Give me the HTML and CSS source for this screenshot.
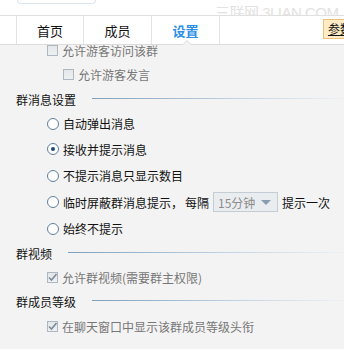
FILE: index.html
```html
<!DOCTYPE html>
<html>
<head>
<meta charset="utf-8">
<link rel="stylesheet" href="styles.css">
</head>
<body>
<div class="page">
  <div class="top">
    <div class="search"></div>
    <div class="watermark">三联网 3LIAN.COM</div>
  </div>
  <div class="tabs">
    <div class="tab first">首页</div>
    <div class="tab">成员</div>
    <div class="tab active">设置<span class="notch"></span></div>
    <div class="btn">参数</div>
  </div>
  <div class="content">
    <div class="row cb clipped"><span class="box"></span><span class="dis">允许游客访问该群</span></div>
    <div class="row cb sub"><span class="box"></span><span class="dis">允许游客发言</span></div>
    <div class="head h1"><span>群消息设置</span><span class="line"></span></div>
    <div class="row radio r1"><span class="rd"></span>自动弹出消息</div>
    <div class="row radio"><span class="rd on"></span>接收并提示消息</div>
    <div class="row radio"><span class="rd"></span>不提示消息只显示数目</div>
    <div class="row radio"><span class="rd"></span>临时屏蔽群消息提示，<span class="gap"></span>每隔<span class="select"><span class="val">15分钟</span><span class="arrow"></span></span>提示一次</div>
    <div class="row radio"><span class="rd"></span>始终不提示</div>
    <div class="head"><span>群视频</span><span class="line"></span></div>
    <div class="row cb c1"><span class="box checked"><svg width="11" height="11" viewBox="0 0 11 11"><path d="M2 5.5 L4.5 8 L9.5 2" fill="none" stroke="#7d8a97" stroke-width="1.6"/></svg></span><span class="dis">允许群视频(需要群主权限)</span></div>
    <div class="head"><span>群成员等级</span><span class="line"></span></div>
    <div class="row cb c2"><span class="box checked"><svg width="11" height="11" viewBox="0 0 11 11"><path d="M2 5.5 L4.5 8 L9.5 2" fill="none" stroke="#7d8a97" stroke-width="1.6"/></svg></span><span class="dis">在聊天窗口中显示该群成员等级头衔</span></div>
  </div>
</div>
</body>
</html>
```
FILE: styles.css
```css
html, body {
  margin: 0;
  padding: 0;
  background: #f3f3f3;
}
.page {
  width: 344px;
  height: 349px;
  overflow: hidden;
  font-family: "Noto Sans CJK SC", "Liberation Sans", sans-serif;
  font-size: 12px;
  color: #111;
}
.top {
  height: 15px;
  background: #fff;
  position: relative;
}
.search {
  margin-left: 17px;
  width: 77px;
  height: 3px;
  border: 1px solid #dde6ee;
  border-top: none;
  border-radius: 0 0 5px 5px;
  background: #fff;
}
.watermark {
  position: absolute;
  left: 215px;
  top: 1px;
  font-family: "Liberation Sans", "Noto Sans CJK SC", sans-serif;
  font-size: 15px;
  color: #e2e2e2;
  white-space: nowrap;
  letter-spacing: -0.5px;
}
.tabs {
  height: 28px;
  background: #fff;
  border-top: 1px solid #e0e0e0;
  border-bottom: 1px solid #dcdcdc;
  display: flex;
  position: relative;
}
.tab {
  width: 67px;
  border-right: 1px solid #e3e3e3;
  display: flex;
  align-items: center;
  justify-content: center;
  font-size: 13px;
  color: #111;
  position: relative;
}
.tab.first {
  margin-left: 16px;
  border-left: 1px solid #e3e3e3;
  width: 66px;
}
.tab.active {
  color: #2b8fe6;
  font-weight: bold;
}
.notch {
  position: absolute;
  left: 30px;
  bottom: -1px;
  width: 0;
  height: 0;
  border-left: 5px solid transparent;
  border-right: 5px solid transparent;
  border-bottom: 5px solid #dcdcdc;
}
.notch::after {
  content: "";
  position: absolute;
  left: -4px;
  top: 1px;
  border-left: 4px solid transparent;
  border-right: 4px solid transparent;
  border-bottom: 4px solid #f3f3f3;
}
.btn {
  position: absolute;
  left: 323px;
  top: 3px;
  width: 30px;
  height: 18px;
  background: #fdecc5;
  border: 1px solid #eac07a;
  font-size: 12px;
  line-height: 18px;
  padding-left: 4px;
  text-decoration: underline;
  white-space: nowrap;
  overflow: hidden;
}
.content {
  height: 304px;
  overflow: hidden;
}
.row {
  display: flex;
  align-items: center;
  padding-left: 47px;
  white-space: nowrap;
}
.row.cb {
  height: 25px;
}
.row.clipped {
  margin-top: -7px;
  height: 24px;
}
.row.sub {
  padding-left: 63px;
}
.row.c1 {
  height: 26px;
}
.row.c2 {
  height: 28px;
}
.dis {
  color: #777;
}
.box {
  width: 9px;
  height: 9px;
  border: 1px solid #aeb8c3;
  background: linear-gradient(#e4e7ea, #eef0f2);
  margin-right: 4px;
  position: relative;
  flex: none;
}
.box svg {
  position: absolute;
  left: -1px;
  top: -1px;
}
.head {
  display: flex;
  align-items: center;
  height: 22px;
  padding-left: 16px;
}
.head.h1 {
  height: 24px;
}
.head .line {
  flex: 1;
  height: 1px;
  margin-left: 16px;
  margin-top: -2px;
  background: linear-gradient(to right, #7e9fbb, #c6d5e2 60%, #eef1f4);
}
.row.radio {
  height: 26.5px;
}
.row.radio.r1 {
  height: 25px;
}
.rd {
  width: 10px;
  height: 10px;
  border: 1px solid #5f7f9c;
  border-radius: 50%;
  background: #fff;
  margin-right: 4px;
  position: relative;
  flex: none;
}
.rd.on::after {
  content: "";
  position: absolute;
  left: 3px;
  top: 3px;
  width: 4px;
  height: 4px;
  border-radius: 50%;
  background: #1d4a78;
}
.gap {
  width: 2px;
}
.select {
  display: inline-flex;
  align-items: center;
  width: 63px;
  height: 18px;
  border: 1px solid #c6ccd3;
  background: #eaedf0;
  margin: 0 4px 0 4px;
  box-sizing: content-box;
}
.select .val {
  color: #8c8c8c;
  padding-left: 4px;
  flex: 1;
}
.select .arrow {
  width: 0;
  height: 0;
  border-left: 5px solid transparent;
  border-right: 5px solid transparent;
  border-top: 5px solid #8a9bb0;
  margin-right: 6px;
}
```
